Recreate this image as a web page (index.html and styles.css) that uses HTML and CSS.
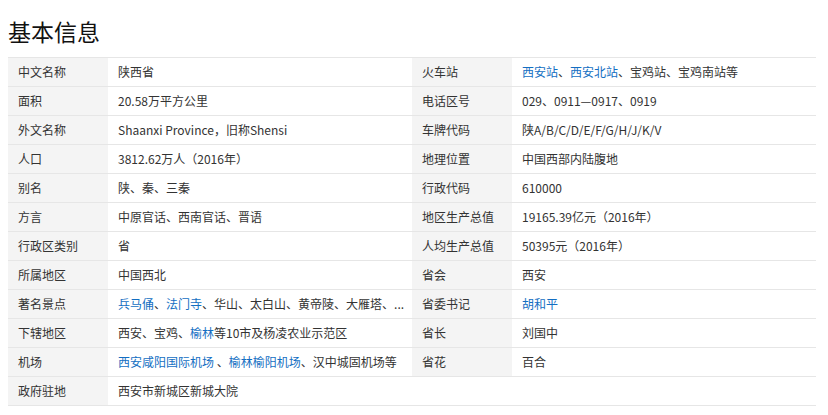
FILE: index.html
```html
<!DOCTYPE html>
<html lang="zh-CN">
<head>
<meta charset="utf-8">
<title>基本信息</title>
<link rel="stylesheet" href="styles.css">
</head>
<body>
<h2 class="title">基本信息</h2>
<div class="basic-info">
  <dl class="info-col">
    <dt class="label">中文名称</dt><dd class="value">陕西省</dd>
    <dt class="label">面积</dt><dd class="value">20.58万平方公里</dd>
    <dt class="label">外文名称</dt><dd class="value">Shaanxi Province，旧称Shensi</dd>
    <dt class="label">人口</dt><dd class="value">3812.62万人（2016年）</dd>
    <dt class="label">别名</dt><dd class="value">陕、秦、三秦</dd>
    <dt class="label">方言</dt><dd class="value">中原官话、西南官话、晋语</dd>
    <dt class="label">行政区类别</dt><dd class="value">省</dd>
    <dt class="label">所属地区</dt><dd class="value">中国西北</dd>
    <dt class="label">著名景点</dt><dd class="value"><a class="link" href="#">兵马俑</a>、<a class="link" href="#">法门寺</a>、华山、太白山、黄帝陵、大雁塔、...</dd>
    <dt class="label">下辖地区</dt><dd class="value">西安、宝鸡、<a class="link" href="#">榆林</a>等10市及杨凌农业示范区</dd>
    <dt class="label">机场</dt><dd class="value"><a class="link" href="#">西安咸阳国际机场</a> 、<a class="link" href="#">榆林榆阳机场</a>、汉中城固机场等</dd>
    <dt class="label">政府驻地</dt><dd class="value">西安市新城区新城大院</dd>
  </dl>
  <dl class="info-col">
    <dt class="label">火车站</dt><dd class="value"><a class="link" href="#">西安站</a>、<a class="link" href="#">西安北站</a>、宝鸡站、宝鸡南站等</dd>
    <dt class="label">电话区号</dt><dd class="value">029、0911—0917、0919</dd>
    <dt class="label">车牌代码</dt><dd class="value">陕A/B/C/D/E/F/G/H/J/K/V</dd>
    <dt class="label">地理位置</dt><dd class="value">中国西部内陆腹地</dd>
    <dt class="label">行政代码</dt><dd class="value">610000</dd>
    <dt class="label">地区生产总值</dt><dd class="value">19165.39亿元（2016年）</dd>
    <dt class="label">人均生产总值</dt><dd class="value">50395元（2016年）</dd>
    <dt class="label">省会</dt><dd class="value">西安</dd>
    <dt class="label">省委书记</dt><dd class="value"><a class="link" href="#">胡和平</a></dd>
    <dt class="label">省长</dt><dd class="value">刘国中</dd>
    <dt class="label">省花</dt><dd class="value">百合</dd>
    <dt class="label label-empty"></dt><dd class="value"></dd>
  </dl>
</div>
</body>
</html>
```
FILE: styles.css
```css
html, body {
  background: #fff;
}
body {
  margin: 8px;
  font-family: "Noto Sans CJK SC", "Microsoft YaHei", "Liberation Sans", sans-serif;
  color: #333;
}
.title {
  margin: 0 0 3px;
  font-size: 23px;
  line-height: 46px;
  font-weight: normal;
  color: #111;
}
.basic-info {
  width: 808px;
  display: flex;
  border-top: 1px solid #e6e6e6;
}
.info-col {
  flex: 1 1 0;
  margin: 0;
  display: grid;
  grid-template-columns: 100px 1fr;
}
.label, .value {
  margin: 0;
  height: 28px;
  line-height: 28px;
  font-size: 12px;
  border-bottom: 1px solid #e6e6e6;
  padding: 0 10px;
  white-space: nowrap;
  overflow: hidden;
}
.label {
  background: #f4f4f4;
  color: #333;
}
.label-empty {
  background: #fff;
}
.value {
  color: #333;
}
.link {
  color: #136ec2;
  text-decoration: none;
}
```
